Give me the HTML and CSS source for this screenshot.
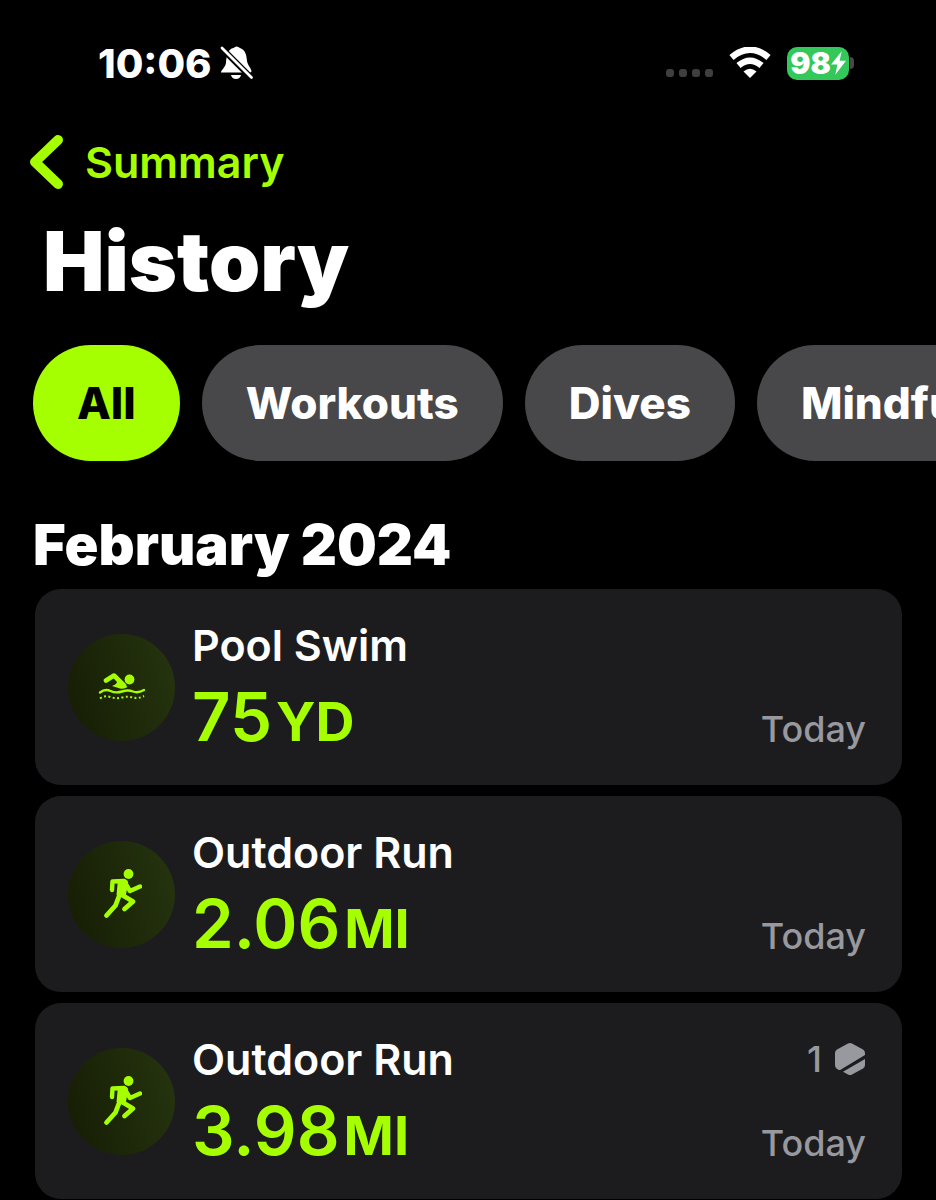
FILE: index.html
```
<!DOCTYPE html>
<html lang="en">
<head>
    <meta charset="UTF-8">
    <meta name="viewport" content="width=device-width, initial-scale=1.0">
    <title>History</title>
    <link rel="stylesheet" href="styles.css">
</head>
<body>
    <!-- Shared icons -->
    <svg class="icon-defs" aria-hidden="true">
        <symbol id="icon-run" viewBox="0 0 40 50">
            <circle cx="26.500" cy="5" r="4.900"/>
            <path d="M10 21L10.500 12.500L22 12L28 22L38 17.500" fill="none" stroke="currentColor" stroke-width="4.400" stroke-linecap="round" stroke-linejoin="round"/>
            <path d="M16 10.500L22 10.300Q27 10.500 26 15.500L23.500 28L14.500 26Z"/>
            <path d="M17.500 26L13.500 36.500L4.500 46.500M20 26L31 32.500L22.500 40" fill="none" stroke="currentColor" stroke-width="4.800" stroke-linecap="round" stroke-linejoin="round"/>
        </symbol>
    </svg>

    <header class="status-bar">
        <div class="status-left">
            <span class="time">10:06</span>
            <svg class="bell" viewBox="0 0 34 34" aria-label="Silent mode">
                <path d="M1 26.500C1 24 5 22 6 17C6.500 9 8 3 13.500 2Q16.500-1 20 2C26 4 26.500 10 27 15C28 20 31 22 31.500 25Q31.500 26.500 30 26.500Z" fill="#fff"/>
                <path d="M11 29H21Q20 33 16 33T11 29Z" fill="#fff"/>
                <path d="M1.500 2L32 32.500" stroke="#000" stroke-width="6"/>
                <path d="M2 2L31.500 31.500" stroke="#fff" stroke-width="2.800" stroke-linecap="round"/>
            </svg>
        </div>
        <div class="status-right">
            <div class="signal"><i></i><i></i><i></i><i></i></div>
            <svg class="wifi" viewBox="0 0 42 32" aria-label="Wi-Fi">
                <path d="M2.500 10.500Q21-5 39.500 10.500" fill="none" stroke="#fff" stroke-width="6.500"/>
                <path d="M9.500 18.500Q21 9 32.500 18.500" fill="none" stroke="#fff" stroke-width="6.500"/>
                <path d="M14.500 24.500Q21 19 27.500 24.500L21 31Z" fill="#fff"/>
            </svg>
            <div class="battery">
                <span class="battery-level">98<svg class="bolt" viewBox="0 0 14 22" aria-hidden="true"><path d="M10 0L0 12.500H6L4 22L14 9H8Z" fill="#fff"/></svg></span>
                <span class="battery-cap"></span>
            </div>
        </div>
    </header>

    <nav class="nav-bar">
        <a href="#" class="back">
            <svg class="chevron" viewBox="0 0 33 54" aria-hidden="true">
                <path d="M28 5L5 27L28 49" fill="none" stroke="currentColor" stroke-width="10" stroke-linecap="round" stroke-linejoin="round"/>
            </svg>
            <span>Summary</span>
        </a>
    </nav>

    <main>
        <h1>History</h1>

        <div class="filters">
            <button class="chip active">All</button>
            <button class="chip">Workouts</button>
            <button class="chip">Dives</button>
            <button class="chip">Mindfulness</button>
        </div>

        <section class="month">
            <h2>February 2024</h2>
            <ul class="activities">
                <li class="card">
                    <div class="badge">
                        <svg class="swim" viewBox="0 0 48 28" aria-hidden="true">
                            <circle cx="31.500" cy="6.500" r="4.900"/>
                            <path d="M8 7.500L16 2.500L26 12.500" fill="none" stroke="currentColor" stroke-width="4.600" stroke-linecap="round" stroke-linejoin="round"/>
                            <path d="M17 1.500L29.500 14Q26 16.500 22 15.500L14 13Q18 11.500 19 9.500Z"/>
                            <path d="M2 19.500Q7 15.500 12.500 18T24 18.500T35 18.500T46 17" fill="none" stroke="currentColor" stroke-width="2.400" stroke-linecap="round"/>
                            <path d="M2 25.500Q7 22 12.500 24T24 24.500T35 24.500T46 23" fill="none" stroke="currentColor" stroke-width="2" stroke-dasharray="2 2.400"/>
                        </svg>
                    </div>
                    <div class="info">
                        <h3>Pool Swim</h3>
                        <p class="value">75<span class="unit">YD</span></p>
                    </div>
                    <div class="meta">
                        <span>Today</span>
                    </div>
                </li>
                <li class="card">
                    <div class="badge">
                        <svg class="run" aria-hidden="true"><use href="#icon-run"/></svg>
                    </div>
                    <div class="info">
                        <h3>Outdoor Run</h3>
                        <p class="value">2.06<span class="unit">MI</span></p>
                    </div>
                    <div class="meta">
                        <span>Today</span>
                    </div>
                </li>
                <li class="card">
                    <div class="badge">
                        <svg class="run" aria-hidden="true"><use href="#icon-run"/></svg>
                    </div>
                    <div class="info">
                        <h3>Outdoor Run</h3>
                        <p class="value">3.98<span class="unit">MI</span></p>
                    </div>
                    <div class="meta">
                        <span class="awards">1
                            <svg class="award" viewBox="0 0 32 34" aria-label="Award">
                                <path d="M14 1.500Q16 .5 18 1.500L29 7.500Q31 8.700 31 11V13L7 27.500Q5.500 28.500 4 27.500L2.500 26.500Q1 25.500 1 23V11Q1 8.700 3 7.500Z"/>
                                <path d="M31 17V23Q31 25.300 29 26.500L18 32.500Q16 33.500 14 32.500L9 29.800Z"/>
                            </svg>
                        </span>
                        <span>Today</span>
                    </div>
                </li>
            </ul>
        </section>
    </main>
</body>
</html>
```
FILE: styles.css
```
* {
    box-sizing: border-box;
}
body {
    font-family: 'Inter', 'Liberation Sans', sans-serif;
    margin: 0;
    background-color: #000;
    color: #fff;
    overflow-x: hidden;
}
h1, h2, h3, p, ul {
    margin: 0;
    padding: 0;
}
svg {
    display: block;
    fill: currentColor;
    flex-shrink: 0;
}
.icon-defs {
    display: none;
}

/* Status bar */
.status-bar {
    display: flex;
    justify-content: space-between;
    align-items: center;
    height: 126px;
    padding: 0 82px 0 98px;
}
.status-left, .status-right {
    display: flex;
    align-items: center;
}
.status-left {
    gap: 8px;
}
.time {
    padding-top: 2px;
    font-size: 40px;
    font-weight: 800;
    line-height: 46px;
}
.bell {
    width: 34px;
    height: 34px;
}
.status-right {
    gap: 16px;
}
.signal {
    display: flex;
    gap: 5px;
    padding-top: 20px;
}
.signal i {
    width: 8px;
    height: 8px;
    border-radius: 3px;
    background-color: #3f3f41;
}
.wifi {
    width: 42px;
    height: 32px;
}
.battery {
    display: flex;
    align-items: center;
    gap: 1px;
}
.battery-level {
    display: flex;
    align-items: center;
    justify-content: center;
    width: 62px;
    height: 33px;
    border-radius: 10px;
    background-color: #34c759;
    font-size: 30px;
    font-weight: 900;
}
.bolt {
    width: 15px;
    height: 24px;
}
.battery-cap {
    width: 4px;
    height: 12px;
    border-radius: 0 4px 4px 0;
    background-color: #48484a;
}

/* Navigation */
.nav-bar {
    display: flex;
    padding: 8px 30px 0;
}
.back {
    display: flex;
    align-items: center;
    gap: 22px;
    color: #a6ff00;
    font-size: 43px;
    font-weight: 600;
    line-height: 56px;
    text-decoration: none;
}
.chevron {
    width: 33px;
    height: 54px;
}
h1 {
    padding: 24px 43px 0;
    font-size: 82px;
    font-weight: 900;
    line-height: 96px;
}

/* Filters */
.filters {
    display: flex;
    gap: 22px;
    margin-top: 35px;
    padding-left: 33px;
    overflow: hidden;
}
.chip {
    flex-shrink: 0;
    height: 116px;
    padding: 0 44px;
    border: none;
    border-radius: 58px;
    background-color: #48484a;
    color: #fff;
    font-family: inherit;
    font-size: 44px;
    font-weight: 800;
    cursor: pointer;
}
.chip.active {
    background-color: #a6ff00;
    color: #000;
}

/* Activity list */
.month {
    padding: 52px 34px 0 33px;
}
h2 {
    font-size: 56px;
    font-weight: 900;
    line-height: 64px;
    padding-bottom: 12px;
}
.activities {
    display: grid;
    gap: 11px;
    margin-left: 2px;
    list-style: none;
}
.card {
    display: flex;
    align-items: center;
    gap: 17px;
    min-height: 196px;
    padding: 28px 36px 28px 33px;
    border-radius: 26px;
    background-color: #1c1c1e;
}
.badge {
    display: flex;
    align-items: center;
    justify-content: center;
    width: 107px;
    height: 107px;
    border-radius: 50%;
    background: linear-gradient(75deg, #151c04, #26350f);
    color: #a6ff00;
    flex-shrink: 0;
}
.swim {
    width: 48px;
    height: 28px;
}
.run {
    width: 40px;
    height: 50px;
}
.info {
    flex: 1;
}
h3 {
    font-size: 43px;
    font-weight: 600;
    line-height: 56px;
}
.value {
    padding-top: 4px;
    color: #a6ff00;
    font-size: 67px;
    font-weight: 600;
    line-height: 80px;
}
.unit {
    margin-left: 4px;
    font-size: 54px;
    font-weight: 700;
    line-height: 1;
}
.meta {
    display: flex;
    flex-direction: column;
    align-items: flex-end;
    align-self: stretch;
    justify-content: flex-end;
    color: #98989f;
    font-size: 36px;
    font-weight: 500;
    line-height: 56px;
}
.awards {
    display: flex;
    align-items: center;
    gap: 12px;
    margin-bottom: auto;
}
.award {
    width: 32px;
    height: 34px;
}
```
